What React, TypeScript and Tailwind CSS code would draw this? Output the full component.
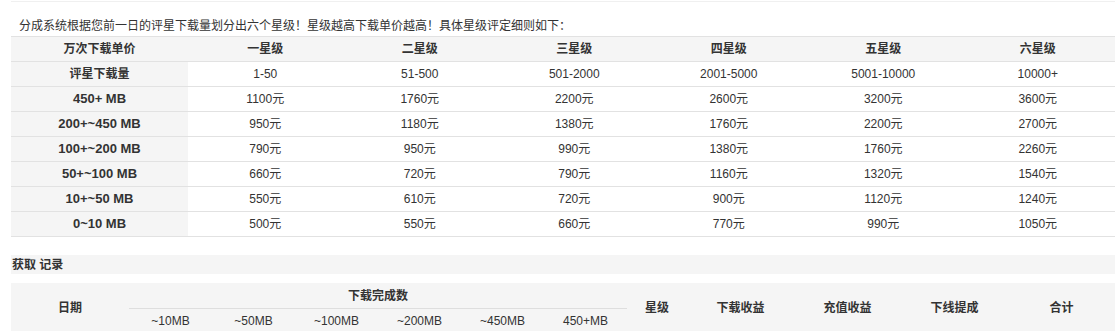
const levels = ['一星级', '二星级', '三星级', '四星级', '五星级', '六星级'];

const rows = [
  { label: '评星下载量', latin: false, values: ['1-50', '51-500', '501-2000', '2001-5000', '5001-10000', '10000+'] },
  { label: '450+ MB', latin: true, values: ['1100元', '1760元', '2200元', '2600元', '3200元', '3600元'] },
  { label: '200+~450 MB', latin: true, values: ['950元', '1180元', '1380元', '1760元', '2200元', '2700元'] },
  { label: '100+~200 MB', latin: true, values: ['790元', '950元', '990元', '1380元', '1760元', '2260元'] },
  { label: '50+~100 MB', latin: true, values: ['660元', '720元', '790元', '1160元', '1320元', '1540元'] },
  { label: '10+~50 MB', latin: true, values: ['550元', '610元', '720元', '900元', '1120元', '1240元'] },
  { label: '0~10 MB', latin: true, values: ['500元', '550元', '660元', '770元', '990元', '1050元'] },
];

const sizes = ['~10MB', '~50MB', '~100MB', '~200MB', '~450MB', '450+MB'];
const tailCols = ['下载收益', '充值收益', '下线提成', '合计'];

export default function App() {
  return (
    <div className="min-h-[331px] bg-white font-['Liberation_Sans','Noto_Sans_CJK_SC',sans-serif] text-[12px] text-[#333]">
      <div className="ml-[11px] w-[1104px]">
        <div className="mt-px h-px bg-[#f0f0f0]" />

        {/* Intro */}
        <p className="mt-[13px] pl-2 leading-[22px]">
          分成系统根据您前一日的评星下载量划分出六个星级！星级越高下载单价越高！具体星级评定细则如下：
        </p>

        {/* Price table */}
        <table className="-mt-px w-full table-fixed border-collapse">
          <colgroup>
            <col className="w-[177px]" />
            {levels.map((l) => (
              <col key={l} />
            ))}
          </colgroup>
          <thead>
            <tr className="h-[25px] border-y border-[#e2e2e2] bg-[#f5f5f5]">
              <th className="p-0 text-center font-bold">万次下载单价</th>
              {levels.map((l) => (
                <th key={l} className="p-0 text-center font-bold">{l}</th>
              ))}
            </tr>
          </thead>
          <tbody>
            {rows.map((row) => (
              <tr key={row.label} className="h-[25px] border-b border-[#e2e2e2]">
                <td className={`bg-[#f5f5f5] p-0 text-center font-bold ${row.latin ? 'text-[13px]' : ''}`}>{row.label}</td>
                {row.values.map((v, i) => (
                  <td key={i} className="p-0 text-center">{v}</td>
                ))}
              </tr>
            ))}
          </tbody>
        </table>

        {/* Records */}
        <div className="mt-[18px] flex h-[19px] items-center bg-[#f5f5f5] pl-px font-bold">获取 记录</div>

        <table className="mt-[9px] w-full table-fixed border-collapse bg-[#f5f5f5]">
          <colgroup>
            <col className="w-[118px]" />
            {sizes.map((s) => (
              <col key={s} className="w-[83px]" />
            ))}
            <col className="w-[60px]" />
            {tailCols.map((c) => (
              <col key={c} />
            ))}
          </colgroup>
          <thead>
            <tr className="h-[25px]">
              <th rowSpan={2} className="p-0 text-center font-bold">日期</th>
              <th colSpan={6} className="border-b border-[#dedede] p-0 pt-px text-center font-bold">下载完成数</th>
              <th rowSpan={2} className="p-0 text-center font-bold">星级</th>
              {tailCols.map((c) => (
                <th key={c} rowSpan={2} className="p-0 text-center font-bold">{c}</th>
              ))}
            </tr>
            <tr className="h-[25px]">
              {sizes.map((s) => (
                <th key={s} className="p-0 text-center font-normal">{s}</th>
              ))}
            </tr>
          </thead>
        </table>
      </div>
    </div>
  );
}
